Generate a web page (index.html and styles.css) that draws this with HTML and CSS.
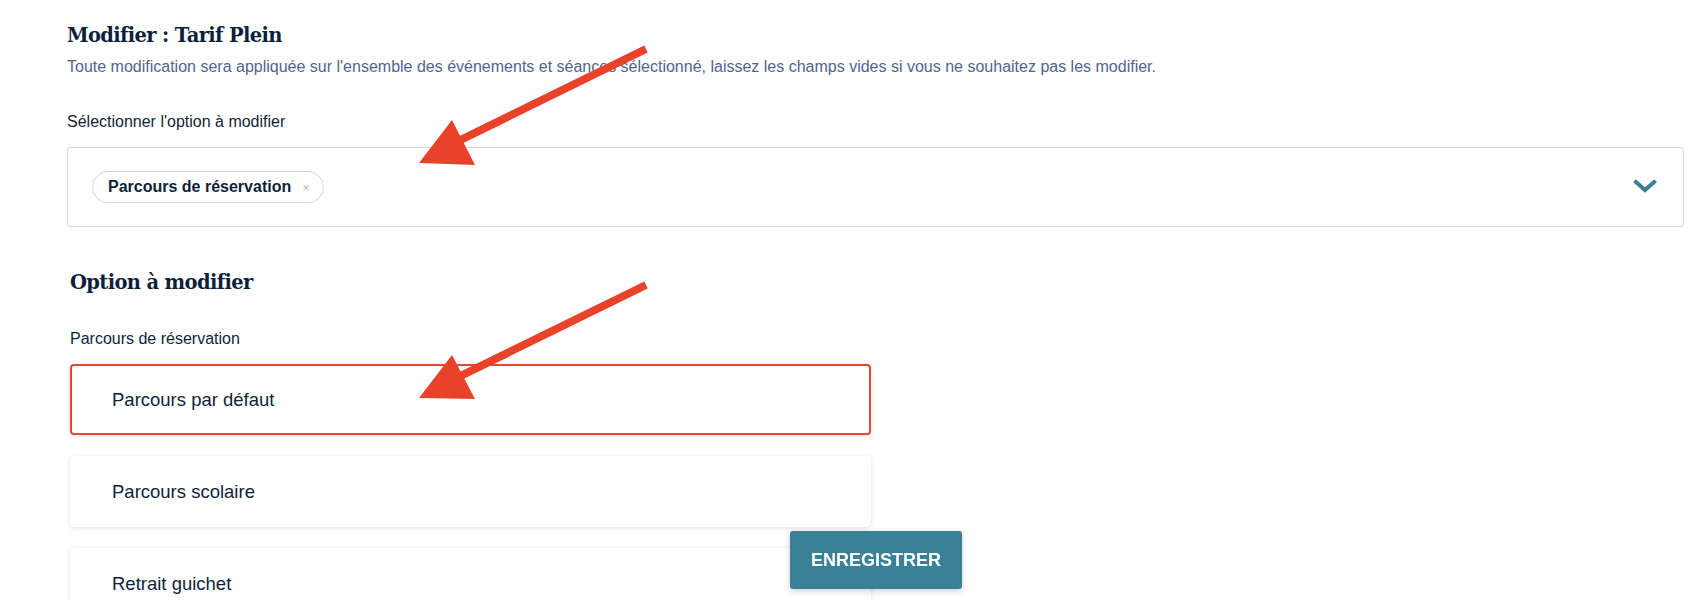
FILE: index.html
```html
<!DOCTYPE html>
<html lang="fr">
<head>
<meta charset="utf-8">
<title>Modifier : Tarif Plein</title>
<link rel="stylesheet" href="styles.css">
</head>
<body>
<div class="page">
  <h1 class="title">Modifier : Tarif Plein</h1>
  <p class="subtitle">Toute modification sera appliquée sur l'ensemble des événements et séances sélectionné, laissez les champs vides si vous ne souhaitez pas les modifier.</p>

  <label class="field-label">Sélectionner l'option à modifier</label>
  <div class="select">
    <span class="chip">Parcours de réservation <span class="chip-x">×</span></span>
    <svg class="chevron" width="24" height="16" viewBox="0 0 24 16"><path d="M3 3 L12 11 L21 3" fill="none" stroke="#3a8196" stroke-width="4" stroke-linecap="square"/></svg>
  </div>

  <section class="options">
    <h2 class="section-title">Option à modifier</h2>
    <div class="field-label sub">Parcours de réservation</div>
    <div class="cards">
      <div class="card selected">Parcours par défaut</div>
      <div class="card">Parcours scolaire</div>
      <div class="card">Retrait guichet</div>
    </div>
  </section>
</div>

<button class="save">ENREGISTRER</button>

<svg class="annotations" width="1698" height="600" viewBox="0 0 1698 600">
  <g fill="#e8432a" stroke="#e8432a">
    <line x1="646" y1="49" x2="440" y2="150" stroke-width="8"/>
    <polygon points="419,163 452,120 475,165" stroke="none"/>
    <line x1="646" y1="285" x2="440" y2="386" stroke-width="8"/>
    <polygon points="419,398 452,355 475,399" stroke="none"/>
  </g>
</svg>
</body>
</html>
```

FILE: styles.css
```css
html, body {
  margin: 0;
  padding: 0;
  background: #ffffff;
}

body {
  font-family: "Liberation Sans", Arial, sans-serif;
  color: #0f1f3a;
  overflow: hidden;
  height: 600px;
}

.page {
  padding: 22px 14px 0 67px;
}

.title {
  font-family: "DejaVu Serif", "Liberation Serif", serif;
  font-weight: bold;
  font-size: 19.5px;
  line-height: 28px;
  margin: 0;
  color: #0e1f3d;
  letter-spacing: -0.65px;
}

.subtitle {
  margin: 6px 0 0;
  font-size: 16px;
  line-height: 22px;
  color: #52648f;
}

.field-label {
  display: block;
  margin-top: 34px;
  font-size: 16px;
  line-height: 20px;
  color: #0f1f3a;
}

.select {
  margin-top: 15px;
  height: 78px;
  border: 1px solid #d7d7dc;
  border-radius: 3px;
  display: flex;
  align-items: center;
  justify-content: space-between;
  padding: 0 26px 0 24px;
}

.chip {
  display: inline-flex;
  align-items: center;
  height: 30px;
  padding: 0 13px 0 15px;
  border: 1px solid #d5d8de;
  border-radius: 16px;
  font-weight: bold;
  font-size: 16px;
  color: #0f1f3a;
}

.chip-x {
  margin-left: 11px;
  font-weight: normal;
  color: #b8bcc4;
  font-size: 13px;
}

.chevron {
  display: block;
}

.options {
  padding-left: 3px;
}

.section-title {
  font-family: "DejaVu Serif", "Liberation Serif", serif;
  font-weight: bold;
  font-size: 19.5px;
  line-height: 28px;
  margin: 42px 0 0;
  color: #0e1f3d;
  letter-spacing: -0.65px;
}

.field-label.sub {
  margin-top: 32px;
}

.cards {
  margin-top: 15px;
  width: 801px;
  display: flex;
  flex-direction: column;
  gap: 21px;
}

.card {
  height: 71px;
  box-sizing: border-box;
  display: flex;
  align-items: center;
  padding-left: 42px;
  font-size: 18.5px;
  color: #0f1f3a;
  background: #fff;
  border-radius: 4px;
  box-shadow: 0 1px 5px rgba(20, 30, 60, 0.14);
}

.card.selected {
  border: 2px solid #e8472f;
  padding-left: 40px;
}

.save {
  position: fixed;
  left: 790px;
  top: 531px;
  width: 172px;
  height: 58px;
  border: none;
  border-radius: 3px;
  background: #3b8196;
  color: #fff;
  font-family: "Liberation Sans", Arial, sans-serif;
  font-weight: bold;
  font-size: 18px;
  box-shadow: 0 2px 6px rgba(0, 0, 0, 0.2);
}

.annotations {
  position: absolute;
  left: 0;
  top: 0;
  pointer-events: none;
}
```
